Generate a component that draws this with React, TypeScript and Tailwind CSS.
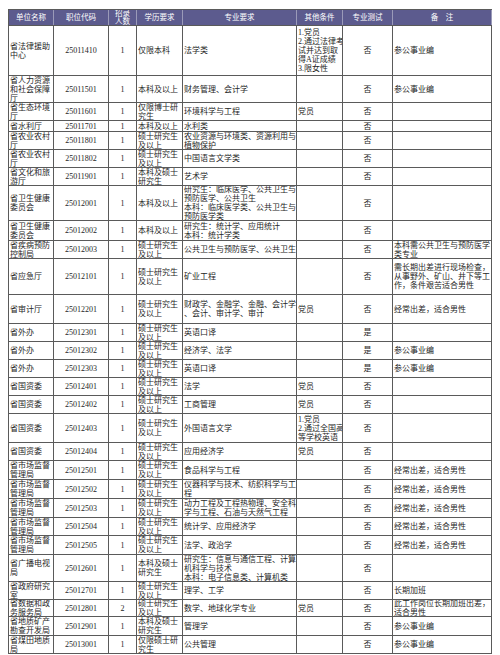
import React from 'react';

type Row = {
  h: string;
  name: string;
  code: string;
  num: string;
  edu: string;
  major: string;
  other: string;
  test: string;
  note: string;
};

const rows: Row[] = [
  { h: 'h-[50px]', name: '省法律援助\n中心', code: '25011410', num: '1', edu: '仅限本科', major: '法学类', other: '1.党员\n2.通过法律考\n试并达到取\n得A证成绩\n3.限女性', test: '否', note: '参公事业编' },
  { h: 'h-[27px]', name: '省人力资源\n和社会保障\n厅', code: '25011501', num: '1', edu: '本科及以上', major: '财务管理、会计学', other: '', test: '否', note: '参公事业编' },
  { h: 'h-[18px]', name: '省生态环境\n厅', code: '25011601', num: '1', edu: '仅限博士研\n究生', major: '环境科学与工程', other: '党员', test: '否', note: '' },
  { h: 'h-[11px]', name: '省水利厅', code: '25011701', num: '1', edu: '本科及以上', major: '水利类', other: '', test: '否', note: '' },
  { h: 'h-[18px]', name: '省农业农村\n厅', code: '25011801', num: '1', edu: '硕士研究生\n及以上', major: '农业资源与环境类、资源利用与\n植物保护', other: '', test: '否', note: '' },
  { h: 'h-[18px]', name: '省农业农村\n厅', code: '25011802', num: '1', edu: '硕士研究生\n及以上', major: '中国语言文学类', other: '', test: '否', note: '' },
  { h: 'h-[18px]', name: '省文化和旅\n游厅', code: '25011901', num: '1', edu: '本科及硕士\n研究生', major: '艺术学', other: '', test: '否', note: '' },
  { h: 'h-[35px]', name: '省卫生健康\n委员会', code: '25012001', num: '1', edu: '本科及以上', major: '研究生：临床医学、公共卫生与\n预防医学、公共卫生\n本科：临床医学类、公共卫生与\n预防医学类', other: '', test: '否', note: '' },
  { h: 'h-[20px]', name: '省卫生健康\n委员会', code: '25012002', num: '1', edu: '本科及以上', major: '研究生：统计学、应用统计\n本科：统计学类', other: '', test: '否', note: '' },
  { h: 'h-[18px]', name: '省疾病预防\n控制局', code: '25012003', num: '1', edu: '硕士研究生\n及以上', major: '公共卫生与预防医学、公共卫生', other: '', test: '否', note: '本科需公共卫生与预防医学\n类专业' },
  { h: 'h-[36px]', name: '省应急厅', code: '25012101', num: '1', edu: '硕士研究生\n及以上', major: '矿业工程', other: '', test: '否', note: '需长期出差进行现场检查，\n从事野外、矿山、井下等工\n作，条件艰苦适合男性' },
  { h: 'h-[29px]', name: '省审计厅', code: '25012201', num: '1', edu: '硕士研究生\n及以上', major: '财政学、金融学、金融、会计学\n、会计、审计学、审计', other: '党员', test: '否', note: '经常出差，适合男性' },
  { h: 'h-[18px]', name: '省外办', code: '25012301', num: '1', edu: '硕士研究生\n及以上', major: '英语口译', other: '', test: '是', note: '' },
  { h: 'h-[18px]', name: '省外办', code: '25012302', num: '1', edu: '硕士研究生\n及以上', major: '经济学、法学', other: '', test: '是', note: '参公事业编' },
  { h: 'h-[18px]', name: '省外办', code: '25012303', num: '1', edu: '硕士研究生\n及以上', major: '英语口译', other: '', test: '是', note: '参公事业编' },
  { h: 'h-[18px]', name: '省国资委', code: '25012401', num: '1', edu: '硕士研究生\n及以上', major: '法学', other: '党员', test: '否', note: '' },
  { h: 'h-[18px]', name: '省国资委', code: '25012402', num: '1', edu: '硕士研究生\n及以上', major: '工商管理', other: '党员', test: '否', note: '' },
  { h: 'h-[29px]', name: '省国资委', code: '25012403', num: '1', edu: '硕士研究生\n及以上', major: '外国语言文学', other: '1.党员\n2.通过全国高\n等学校英语', test: '否', note: '' },
  { h: 'h-[18px]', name: '省国资委', code: '25012404', num: '1', edu: '硕士研究生\n及以上', major: '应用经济学', other: '党员', test: '否', note: '' },
  { h: 'h-[19px]', name: '省市场监督\n管理局', code: '25012501', num: '1', edu: '硕士研究生\n及以上', major: '食品科学与工程', other: '', test: '否', note: '经常出差，适合男性' },
  { h: 'h-[19px]', name: '省市场监督\n管理局', code: '25012502', num: '1', edu: '硕士研究生\n及以上', major: '仪器科学与技术、纺织科学与工\n程', other: '', test: '否', note: '经常出差，适合男性' },
  { h: 'h-[19px]', name: '省市场监督\n管理局', code: '25012503', num: '1', edu: '硕士研究生\n及以上', major: '动力工程及工程热物理、安全科\n学与工程、石油与天然气工程', other: '', test: '否', note: '经常出差，适合男性' },
  { h: 'h-[18px]', name: '省市场监督\n管理局', code: '25012504', num: '1', edu: '硕士研究生\n及以上', major: '统计学、应用经济学', other: '', test: '否', note: '经常出差，适合男性' },
  { h: 'h-[19px]', name: '省市场监督\n管理局', code: '25012505', num: '1', edu: '硕士研究生\n及以上', major: '法学、政治学', other: '', test: '否', note: '经常出差，适合男性' },
  { h: 'h-[27px]', name: '省广播电视\n局', code: '25012601', num: '1', edu: '本科及硕士\n研究生', major: '研究生：信息与通信工程、计算\n机科学与技术\n本科：电子信息类、计算机类', other: '', test: '否', note: '' },
  { h: 'h-[18px]', name: '省政府研究\n室', code: '25012701', num: '1', edu: '硕士研究生\n及以上', major: '理学、工学', other: '', test: '否', note: '长期加班' },
  { h: 'h-[17px]', name: '省数据和政\n务服务局', code: '25012801', num: '2', edu: '硕士研究生\n及以上', major: '数学、地球化学专业', other: '党员', test: '否', note: '此工作岗位长期加班出差，\n适合男性' },
  { h: 'h-[19px]', name: '省地质矿产\n勘查开发局', code: '25012901', num: '1', edu: '本科及硕士\n研究生', major: '管理学', other: '', test: '否', note: '参公事业编' },
  { h: 'h-[18px]', name: '省煤田地质\n局', code: '25013001', num: '1', edu: '仅限硕士研\n究生', major: '公共管理', other: '', test: '否', note: '参公事业编' },
];

const cell = 'flex items-center overflow-hidden whitespace-pre border-r border-b border-[#5a5a5a] h-full';

function Head({ w, children }: { w: string; children: React.ReactNode }) {
  return (
    <div className={`${w} h-full flex items-center justify-center text-center whitespace-pre overflow-hidden border-r border-[#9a9ab8] bg-[#5c5b8e] text-white`}>
      {children}
    </div>
  );
}

export default function App() {
  return (
    <div
      className="w-[500px] h-[655px] bg-white pt-[9px] pl-[8px] text-[8px] leading-[9px] text-[#262626]"
      style={{ fontFamily: '"Liberation Serif", "Noto Sans CJK SC", serif' }}
    >
      <div className="w-[484px] border-l border-t border-[#5a5a5a]">
        <div className="flex h-[16px] leading-[8px] text-[7.5px] border-b border-[#5a5a5a]">
          <Head w="w-[45px]">单位名称</Head>
          <Head w="w-[55px]">职位代码</Head>
          <Head w="w-[28px]">{'招录\n人数'}</Head>
          <Head w="w-[46px]">学历要求</Head>
          <Head w="w-[114px]">专业要求</Head>
          <Head w="w-[46px]">其他条件</Head>
          <Head w="w-[50px]">专业测试</Head>
          <Head w="w-[99px]">{'备    注'}</Head>
        </div>
        {rows.map((r) => (
          <div key={r.code} className={`flex ${r.h}`}>
            <div className={`${cell} w-[45px] pl-[1px]`}>{r.name}</div>
            <div className={`${cell} w-[55px] justify-center`}>{r.code}</div>
            <div className={`${cell} w-[28px] justify-center`}>{r.num}</div>
            <div className={`${cell} w-[46px] pl-[1px]`}>{r.edu}</div>
            <div className={`${cell} w-[114px] pl-[1px]`}>{r.major}</div>
            <div className={`${cell} w-[46px] pl-[1px]`}>{r.other}</div>
            <div className={`${cell} w-[50px] justify-center`}>{r.test}</div>
            <div className={`${cell} w-[99px] pl-[1px]`}>{r.note}</div>
          </div>
        ))}
      </div>
    </div>
  );
}
